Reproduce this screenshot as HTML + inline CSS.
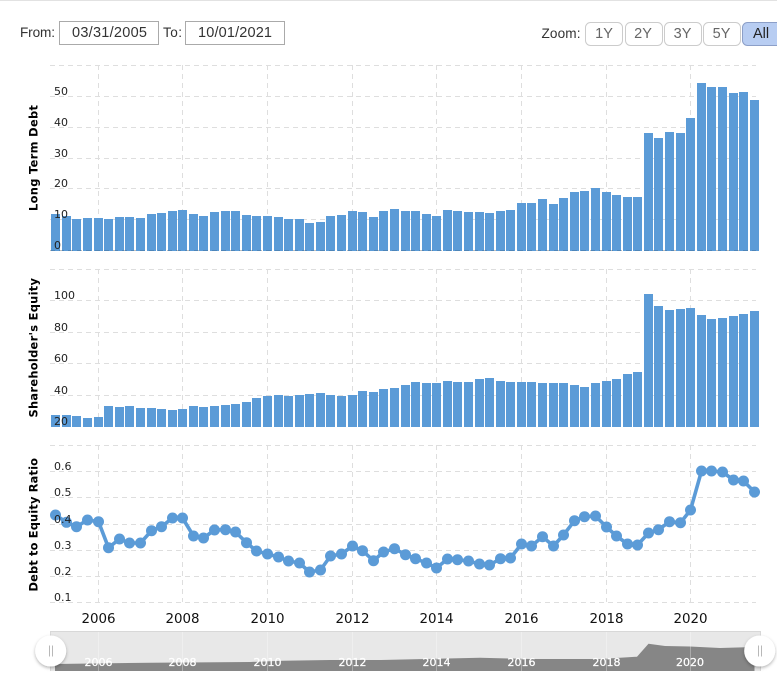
<!DOCTYPE html>
<html>
<head>
<meta charset="utf-8">
<style>
html,body{margin:0;padding:0;background:#fff;width:777px;height:687px;overflow:hidden}
svg{display:block}
.ui{font-family:"Liberation Sans",Arial,sans-serif;font-size:14.5px}
.lb{font-family:"Liberation Sans",Arial,sans-serif;font-size:13.6px}
.tick{font-family:"DejaVu Sans",sans-serif;font-size:11px;fill:#222}
.year{font-family:"DejaVu Sans",sans-serif;font-size:13.4px;fill:#111;text-anchor:middle}
.nav{font-family:"DejaVu Sans",sans-serif;font-size:11px;fill:#fff;stroke:#fff;stroke-width:.25;text-anchor:middle}
.ttl{font-family:"DejaVu Sans",sans-serif;font-weight:bold;font-size:11.4px;fill:#000}
</style>
</head>
<body>
<svg width="777" height="687" viewBox="0 0 777 687" xmlns="http://www.w3.org/2000/svg">
<defs><filter id="s" x="-30%" y="-30%" width="160%" height="170%"><feDropShadow dx="0" dy="1.5" stdDeviation="1.5" flood-color="#000" flood-opacity=".3"/></filter></defs>
<rect x="0" y="0" width="777" height="1" fill="#e2e2e2"/>

<!-- Range inputs -->
<text class="lb" x="20" y="37" fill="#333" textLength="35">From:</text>
<rect x="59.5" y="21.5" width="99" height="23" fill="#fff" stroke="#aaa"/>
<text class="ui" x="72" y="37" fill="#333" textLength="75">03/31/2005</text>
<text class="lb" x="163" y="37" fill="#333" textLength="19">To:</text>
<rect x="185.5" y="21.5" width="99" height="23" fill="#fff" stroke="#aaa"/>
<text class="ui" x="198" y="37" fill="#333" textLength="74">10/01/2021</text>

<!-- Zoom buttons -->
<text class="lb" x="541.5" y="38" fill="#333" textLength="39">Zoom:</text>
<rect x="585.5" y="22.5" width="37" height="23" rx="5" fill="#fff" stroke="#ccc"/>
<rect x="625.5" y="22.5" width="37" height="23" rx="5" fill="#fff" stroke="#ccc"/>
<rect x="664.5" y="22.5" width="37" height="23" rx="5" fill="#fff" stroke="#ccc"/>
<rect x="703.5" y="22.5" width="37" height="23" rx="5" fill="#fff" stroke="#ccc"/>
<rect x="742.5" y="22.5" width="40" height="23" rx="5" fill="#b8cdf2" stroke="#8c9fc8"/>
<text class="ui" x="604" y="38" fill="#666" text-anchor="middle">1Y</text>
<text class="ui" x="643" y="38" fill="#666" text-anchor="middle">2Y</text>
<text class="ui" x="682.5" y="38" fill="#666" text-anchor="middle">3Y</text>
<text class="ui" x="721.5" y="38" fill="#666" text-anchor="middle">5Y</text>
<text class="ui" x="761" y="38" fill="#222" text-anchor="middle">All</text>

<!-- Grid -->
<g fill="none" stroke="#dedede" stroke-dasharray="5 4">
<path d="M50 65.5H756M50 96.5H756M50 127.5H756M50 158.5H756M50 188.5H756M50 219.5H756M50 250.5H756"/>
<path d="M98.5 65V250M182.5 65V250M267.5 65V250M352.5 65V250M436.5 65V250M521.5 65V250M606.5 65V250M690.5 65V250"/>
<path d="M50 269.5H756M50 300.5H756M50 332.5H756M50 363.5H756M50 395.5H756"/>
<path d="M98.5 269V427M182.5 269V427M267.5 269V427M352.5 269V427M436.5 269V427M521.5 269V427M606.5 269V427M690.5 269V427"/>
<path d="M50 445.5H756M50 471.5H756M50 497.5H756M50 524.5H756M50 550.5H756M50 576.5H756M50 602.5H756"/>
<path d="M98.5 445V602M182.5 445V602M267.5 445V602M352.5 445V602M436.5 445V602M521.5 445V602M606.5 445V602M690.5 445V602"/>
</g>

<!-- Long Term Debt bars -->
<path fill="#5b9bd7" d="M51 214h9V251h-9zM62 216h9V251h-9zM72 219h9V251h-9zM83 218h9V251h-9zM94 218h9V251h-9zM104 219h9V251h-9zM115 217h9V251h-9zM125 217h9V251h-9zM136 218h9V251h-9zM147 214h9V251h-9zM157 213h9V251h-9zM168 211h9V251h-9zM178 210h9V251h-9zM189 214h9V251h-9zM199 216h9V251h-9zM210 212h9V251h-9zM221 211h9V251h-9zM231 211h9V251h-9zM242 215h9V251h-9zM252 216h9V251h-9zM263 216h9V251h-9zM274 217h9V251h-9zM284 219h9V251h-9zM295 219h9V251h-9zM305 223h9V251h-9zM316 222h9V251h-9zM326 216h9V251h-9zM337 215h9V251h-9zM348 211h9V251h-9zM358 212h9V251h-9zM369 217h9V251h-9zM379 211h9V251h-9zM390 209h9V251h-9zM401 211h9V251h-9zM411 211h9V251h-9zM422 214h9V251h-9zM432 216h9V251h-9zM443 210h9V251h-9zM453 211h9V251h-9zM464 212h9V251h-9zM475 212h9V251h-9zM485 213h9V251h-9zM496 211h9V251h-9zM506 210h9V251h-9zM517 203h9V251h-9zM527 203h9V251h-9zM538 199h9V251h-9zM549 204h9V251h-9zM559 198h9V251h-9zM570 192h9V251h-9zM580 191h9V251h-9zM591 188h9V251h-9zM602 192h9V251h-9zM612 195h9V251h-9zM623 197h9V251h-9zM633 197h9V251h-9zM644 133h9V251h-9zM654 138h9V251h-9zM665 132h9V251h-9zM676 133h9V251h-9zM686 118h9V251h-9zM697 83h9V251h-9zM707 87h9V251h-9zM718 87h9V251h-9zM729 93h9V251h-9zM739 92h9V251h-9zM750 100h9V251h-9z"/>
<path d="M50 250.5H756" stroke="#000" stroke-opacity=".14" stroke-dasharray="5 4" fill="none"/>

<!-- Shareholder's Equity bars -->
<path fill="#5b9bd7" d="M51 415h9V427h-9zM62 415h9V427h-9zM72 416h9V427h-9zM83 418h9V427h-9zM94 417h9V427h-9zM104 406h9V427h-9zM115 407h9V427h-9zM125 406h9V427h-9zM136 408h9V427h-9zM147 408h9V427h-9zM157 409h9V427h-9zM168 410h9V427h-9zM178 409h9V427h-9zM189 406h9V427h-9zM199 407h9V427h-9zM210 406h9V427h-9zM221 405h9V427h-9zM231 404h9V427h-9zM242 402h9V427h-9zM252 398h9V427h-9zM263 396h9V427h-9zM274 395h9V427h-9zM284 396h9V427h-9zM295 395h9V427h-9zM305 394h9V427h-9zM316 393h9V427h-9zM326 395h9V427h-9zM337 396h9V427h-9zM348 395h9V427h-9zM358 391h9V427h-9zM369 392h9V427h-9zM379 389h9V427h-9zM390 388h9V427h-9zM401 385h9V427h-9zM411 382h9V427h-9zM422 383h9V427h-9zM432 383h9V427h-9zM443 381h9V427h-9zM453 382h9V427h-9zM464 382h9V427h-9zM475 379h9V427h-9zM485 378h9V427h-9zM496 381h9V427h-9zM506 382h9V427h-9zM517 382h9V427h-9zM527 382h9V427h-9zM538 383h9V427h-9zM549 383h9V427h-9zM559 383h9V427h-9zM570 385h9V427h-9zM580 387h9V427h-9zM591 383h9V427h-9zM602 381h9V427h-9zM612 379h9V427h-9zM623 374h9V427h-9zM633 372h9V427h-9zM644 294h9V427h-9zM654 306h9V427h-9zM665 310h9V427h-9zM676 309h9V427h-9zM686 308h9V427h-9zM697 315h9V427h-9zM707 319h9V427h-9zM718 318h9V427h-9zM729 316h9V427h-9zM739 314h9V427h-9zM750 311h9V427h-9z"/>

<!-- Ratio line -->
<path fill="none" stroke="#5b9bd7" stroke-width="3.6" stroke-linejoin="round" d="M55.5 515L66.5 522.3L76.5 526.7L87.5 520L98.5 521.7L108.5 547.7L119.5 539L129.5 543L140.5 543L151.5 530.7L161.5 526.7L172.5 518L182.5 518L193.5 536L203.5 538L214.5 530L225.5 529.7L235.5 532L246.5 542.7L256.5 551L267.5 554L278.5 557L288.5 561L299.5 563L309.5 572L320.5 570L330.5 556L341.5 554L352.5 546L362.5 550.7L373.5 560.7L383.5 552L394.5 548.7L405.5 554.7L415.5 558.7L426.5 563L436.5 568L447.5 559L457.5 559.7L468.5 561L479.5 564L489.5 565L500.5 558.7L510.5 558L521.5 544L531.5 546L542.5 536.7L553.5 546L563.5 535L574.5 520.7L584.5 516.7L595.5 516L606.5 527L616.5 536L627.5 544L637.5 545L648.5 533L658.5 529.7L669.5 521.7L680.5 522.7L690.5 510L701.5 471L711.5 471L722.5 472L733.5 480L743.5 481L754.5 492"/>
<path fill="none" stroke="#5b9bd7" stroke-width="11" stroke-linecap="round" d="M55.5 515h.01M66.5 522.3h.01M76.5 526.7h.01M87.5 520h.01M98.5 521.7h.01M108.5 547.7h.01M119.5 539h.01M129.5 543h.01M140.5 543h.01M151.5 530.7h.01M161.5 526.7h.01M172.5 518h.01M182.5 518h.01M193.5 536h.01M203.5 538h.01M214.5 530h.01M225.5 529.7h.01M235.5 532h.01M246.5 542.7h.01M256.5 551h.01M267.5 554h.01M278.5 557h.01M288.5 561h.01M299.5 563h.01M309.5 572h.01M320.5 570h.01M330.5 556h.01M341.5 554h.01M352.5 546h.01M362.5 550.7h.01M373.5 560.7h.01M383.5 552h.01M394.5 548.7h.01M405.5 554.7h.01M415.5 558.7h.01M426.5 563h.01M436.5 568h.01M447.5 559h.01M457.5 559.7h.01M468.5 561h.01M479.5 564h.01M489.5 565h.01M500.5 558.7h.01M510.5 558h.01M521.5 544h.01M531.5 546h.01M542.5 536.7h.01M553.5 546h.01M563.5 535h.01M574.5 520.7h.01M584.5 516.7h.01M595.5 516h.01M606.5 527h.01M616.5 536h.01M627.5 544h.01M637.5 545h.01M648.5 533h.01M658.5 529.7h.01M669.5 521.7h.01M680.5 522.7h.01M690.5 510h.01M701.5 471h.01M711.5 471h.01M722.5 472h.01M733.5 480h.01M743.5 481h.01M754.5 492h.01"/>

<!-- Tick labels -->
<text class="tick" x="54" y="95">50</text>
<text class="tick" x="54" y="126">40</text>
<text class="tick" x="54" y="157">30</text>
<text class="tick" x="54" y="187">20</text>
<text class="tick" x="54" y="218">10</text>
<text class="tick" x="54" y="249">0</text>
<text class="tick" x="54" y="299">100</text>
<text class="tick" x="54" y="331">80</text>
<text class="tick" x="54" y="362">60</text>
<text class="tick" x="54" y="394">40</text>
<text class="tick" x="54" y="425">20</text>
<text class="tick" x="54" y="470">0.6</text>
<text class="tick" x="54" y="496">0.5</text>
<text class="tick" x="54" y="523">0.4</text>
<text class="tick" x="54" y="549">0.3</text>
<text class="tick" x="54" y="575">0.2</text>
<text class="tick" x="54" y="601">0.1</text>

<!-- Axis titles -->
<text class="ttl" transform="translate(37.5,211) rotate(-90)" textLength="106">Long Term Debt</text>
<text class="ttl" transform="translate(37.5,417.5) rotate(-90)" textLength="139.5">Shareholder's Equity</text>
<text class="ttl" transform="translate(37.5,591.5) rotate(-90)" textLength="133.5">Debt to Equity Ratio</text>

<!-- Year labels -->
<text class="year" x="98.5" y="623">2006</text>
<text class="year" x="182.5" y="623">2008</text>
<text class="year" x="267.5" y="623">2010</text>
<text class="year" x="352.5" y="623">2012</text>
<text class="year" x="436.5" y="623">2014</text>
<text class="year" x="521.5" y="623">2016</text>
<text class="year" x="606.5" y="623">2018</text>
<text class="year" x="690.5" y="623">2020</text>

<!-- Navigator -->
<rect x="50" y="631" width="711" height="40" fill="#e8e8e8"/>
<path d="M50 631.5H761M760.5 631V671M50.5 631V671" stroke="#d8d8d8" fill="none"/>
<path fill="#868686" d="M55 664L150 662.7L250 662L283 660.7L330 660L380 660L480 657.7L530 659L600 659L637 656.7L648.5 643.7L665 646L690 646.5L720 648L754.5 647V671H55z"/>
<path d="M98.5 632V671M182.5 632V671M267.5 632V671M352.5 632V671M436.5 632V671M521.5 632V671M606.5 632V671M690.5 632V671" stroke="#fff" stroke-opacity=".3" fill="none"/>
<text class="nav" x="98.5" y="666">2006</text>
<text class="nav" x="182.5" y="666">2008</text>
<text class="nav" x="267.5" y="666">2010</text>
<text class="nav" x="352.5" y="666">2012</text>
<text class="nav" x="436.5" y="666">2014</text>
<text class="nav" x="521.5" y="666">2016</text>
<text class="nav" x="606.5" y="666">2018</text>
<text class="nav" x="690" y="666">2020</text>

<!-- Handles -->
<circle cx="50.7" cy="651" r="15.5" fill="#fff" filter="url(#s)"/>
<circle cx="759.7" cy="651" r="15.5" fill="#fff" filter="url(#s)"/>
<path d="M49.5 645.5V656.5M52.5 645.5V656.5M758.5 645.5V656.5M761.5 645.5V656.5" stroke="#b8b8b8" fill="none"/>
</svg>
</body>
</html>
